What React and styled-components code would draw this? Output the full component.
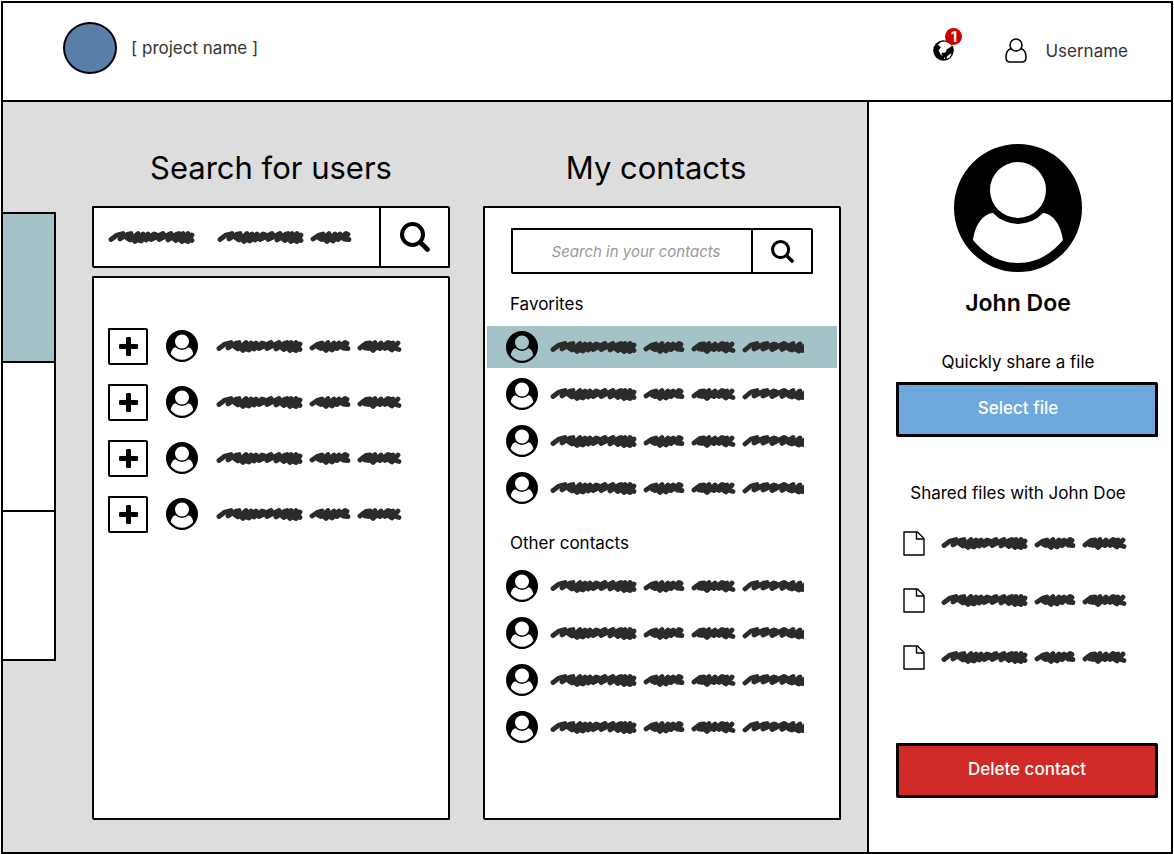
import React from "react";
import styled, { createGlobalStyle, css } from "styled-components";

const Global = createGlobalStyle`
  *, *::before, *::after { box-sizing: border-box; }
  body { margin: 0; background: #fff; }
  body, button, input { font-family: Inter, "Liberation Sans", sans-serif; color: #000; }
  h1, h2, h3, p, ul { margin: 0; padding: 0; font-weight: 400; }
  ul { list-style: none; }
  svg { display: block; flex: none; }
`;

const ink = "2px solid #000";

const sketchBox = css`
  border: ${ink};
  border-radius: 1px 2px 1px 2px;
  background: #fff;
`;

const Page = styled.div`
  min-height: calc(100vh - 1px);
  margin: 1px 1px 0;
  display: flex;
  flex-direction: column;
  border: ${ink};
`;

const Header = styled.header`
  display: flex;
  align-items: center;
  justify-content: space-between;
  height: 99px;
  padding: 0 43px 0 60px;
  border-bottom: ${ink};
`;

const Brand = styled.a`
  display: flex;
  align-items: center;
  gap: 14px;
  padding-bottom: 8px;
  font-size: 17px;
  line-height: 24px;
  color: #333;
  text-decoration: none;
`;

const Logo = styled.span`
  width: 54px;
  height: 52px;
  border: ${ink};
  border-radius: 50%;
  background: #5a7eaa;
`;

const Account = styled.div`
  display: flex;
  align-items: center;
  gap: 51px;
  padding-bottom: 2px;
`;

const PlainButton = styled.button`
  position: relative;
  display: flex;
  align-items: center;
  gap: 18px;
  padding: 0;
  border: 0;
  background: none;
  font-size: 17px;
  line-height: 24px;
  color: #333;
`;

const Badge = styled.span`
  position: absolute;
  top: -12px;
  left: 12px;
  width: 17px;
  height: 17px;
  border-radius: 50%;
  background: #c00;
  color: #fff;
  font-size: 15px;
  font-weight: 700;
  line-height: 17px;
  text-align: center;
`;

const Body = styled.div`
  flex: 1;
  display: flex;
`;

const Main = styled.main`
  flex: 1;
  display: flex;
  background: #ddd;
  padding: 0 26px 32px 0;
`;

const Tabs = styled.nav`
  width: 53px;
  margin: 110px 36px 0 0;
`;

const Tab = styled.button`
  display: block;
  width: 100%;
  height: 151px;
  margin-bottom: -2px;
  padding: 0;
  border: ${ink};
  border-left: 0;
  background: ${(p) => (p.$active ? "#a3c3c8" : "#fff")};
`;

const Columns = styled.div`
  flex: 1;
  display: flex;
  gap: 33px;
`;

const Column = styled.section`
  flex: 1;
  min-width: 0;
  display: flex;
  flex-direction: column;
  padding-top: 46px;
`;

const Title = styled.h1`
  padding-right: ${(p) => (p.$inset ? 12 : 0)}px;
  margin-bottom: 18px;
  font-size: 31px;
  line-height: 40px;
  text-align: center;
`;

const SearchForm = styled.form`
  ${sketchBox}
  position: relative;
  display: flex;
  height: ${(p) => (p.$large ? 62 : 46)}px;
  margin: ${(p) => (p.$large ? "0 0 8px" : "20px 26px 18px")};
`;

const SearchInput = styled.input`
  flex: 1;
  min-width: 0;
  padding: 0 0 0 8px;
  border: 0;
  background: none;
  outline: 0;
  font-size: 15px;
  text-align: center;
  &::placeholder {
    color: #999;
    font-style: italic;
    opacity: 1;
  }
`;

const Typed = styled.span`
  position: absolute;
  inset: 0 auto 0 14px;
  display: flex;
  align-items: center;
  gap: 22px;
  pointer-events: none;
`;

const SearchButton = styled.button`
  width: ${(p) => (p.$large ? 69 : 60)}px;
  display: flex;
  align-items: center;
  justify-content: center;
  padding: 0;
  border: 0;
  border-left: ${ink};
  background: #fff;
`;

const Panel = styled.div`
  ${sketchBox}
  flex: 1;
`;

const Results = styled.ul`
  display: grid;
  gap: 16px;
  padding: 48px 14px;
`;

const Result = styled.li`
  display: flex;
  align-items: center;
  height: 40px;
  gap: 18px;
`;

const AddButton = styled.button`
  ${sketchBox}
  width: 40px;
  height: 37px;
  display: grid;
  place-items: center;
  padding: 0;
`;

const GroupLabel = styled.h2`
  padding: 0 25px;
  margin-bottom: 10px;
  font-size: 17px;
  line-height: 24px;
`;

const ContactList = styled.ul`
  display: grid;
  gap: 5px;
  margin: 0 2px 22px;
`;

const Contact = styled.li`
  display: flex;
  align-items: center;
  gap: 12px;
  height: 42px;
  padding-left: 19px;
  background: ${(p) => (p.$active ? "#a3c3c8" : "transparent")};
`;

const Aside = styled.aside`
  width: 304px;
  display: flex;
  flex-direction: column;
  border-left: ${ink};
  padding: 42px 13px 54px 27px;
`;

const Centered = styled.div`
  display: flex;
  flex-direction: column;
  align-items: center;
  padding-right: 18px;
`;

const Name = styled.h2`
  margin: 16px 0 32px;
  font-size: 23px;
  font-weight: 600;
  line-height: 30px;
`;

const Caption = styled.h3`
  font-size: 17px;
  line-height: 24px;
  margin-bottom: 8px;
`;

const ActionButton = styled.button`
  border: 3px solid #000;
  border-radius: 1px 2px 1px 2px;
  height: 55px;
  padding: 0 ${(p) => (p.$inset ? 18 : 0)}px 4px 0;
  margin-top: ${(p) => (p.$last ? "auto" : 0)};
  margin-bottom: ${(p) => (p.$last ? 0 : 44)}px;
  background: ${(p) => (p.$danger ? "#cf2a27" : "#6fa8dc")};
  color: #fff;
  font-size: 17px;
  font-weight: 500;
`;

const Files = styled.ul`
  display: grid;
  gap: 33px;
  padding: 18px 0 24px 7px;
`;

const File = styled.li`
  display: flex;
  align-items: center;
  gap: 16px;
  height: 24px;
`;

const WORDS = {
  long: [
    87,
    "M3 9.500L9 5L15 3.500L12 9L20 4L23 3.500L19 8L22 10L30 3.500L24 9L27 11.500L35 4L30 10L33 11L40 4L36 8L38 10L46 4L48 4.500L43 9.500L55 3.500L56 5L51 9.500L63 3.500L64 5L60 10L69 4L71 3.500L66 9L68 10.500L75 3.500L71 9L74 11.500L80 3.500L76 10L80 11.500L84 5L81 9L84 10.500",
  ],
  mid: [
    42,
    "M3 9L9 5L13 4L9 8L12 9.500L19 3.500L14 9L17 11.500L25 4L20 9L23 11L30 4L25 8L28 9.500L36 3.500L38 4.500L34 9L39 9.500",
  ],
  wide: [
    45,
    "M3 9L9 4.500L13 4L8 9L11 9.500L18 3.500L13 9L16 11.500L24 4L20 8L23 9.500L31 3.500L33 4L28 9.500L36 4L32 9L35 11L41 4L37 9L42 10.500",
  ],
  cut: [
    62,
    "M3 10L9 5L15 3.500L12 9L22 4L25 3.500L21 9L32 4L34 4.500L30 9.500L42 3.500L44 4.500L40 9.500L51 3.500L47 9L50 10L58 4L53 9L57 11L65 4L58 10L65 11",
  ],
};

const WordRow = styled.span`
  display: flex;
  gap: 6px;
`;

function Scribble({ words }) {
  return (
    <WordRow>
      {words.map((word, i) => (
        <svg key={i} width={WORDS[word][0]} height="14" viewBox={`0 0 ${WORDS[word][0]} 14`} aria-hidden="true">
          <path
            d={WORDS[word][1]}
            fill="none"
            stroke="#2b2b2b"
            strokeWidth="4.800"
            strokeLinecap="round"
            strokeLinejoin="round"
          />
        </svg>
      ))}
    </WordRow>
  );
}

function Avatar({ size }) {
  return (
    <svg width={size} height={size} viewBox="0 0 128 128" aria-hidden="true">
      <path
        fillRule="evenodd"
        d="M64 0A64 64 0 1 1 64 128A64 64 0 1 1 64 0ZM64 18A28 28 0 1 0 64 74A28 28 0 1 0 64 18ZM39 69C28 70 21 82 19 96C31 111 47 119 64 119S97 111 109 96C107 82 100 70 89 69A34 34 0 0 1 39 69Z"
      />
    </svg>
  );
}

function SearchIcon({ size }) {
  return (
    <svg width={size} height={size} viewBox="0 0 30 30" fill="none" stroke="#000" aria-hidden="true">
      <circle cx="12.500" cy="12.500" r="10.500" strokeWidth="4" />
      <path d="M20.500 20.500L27.500 27.500" strokeWidth="4.600" strokeLinecap="round" />
    </svg>
  );
}

function PlusIcon() {
  return (
    <svg width="19" height="19" viewBox="0 0 19 19" aria-hidden="true">
      <rect x="0" y="7" width="19" height="5" rx="1.300" />
      <rect x="7" y="0" width="5" height="19" rx="1.300" />
    </svg>
  );
}

function FileIcon() {
  return (
    <svg width="22" height="25" viewBox="0 0 22 25" fill="none" stroke="#000" strokeWidth="1.400" strokeLinejoin="round" aria-hidden="true">
      <path d="M1 1H14.500L21 7.500V24H1ZM13.500 1V8H21" />
    </svg>
  );
}

function UserIcon() {
  return (
    <svg width="22" height="25" viewBox="0 0 22 25" fill="none" stroke="#000" strokeWidth="1.500" aria-hidden="true">
      <circle cx="11" cy="7" r="6" />
      <path d="M6 10.500C2.500 11.500 1 15 1 19.500C1 22.500 2.500 24 5 24H17C19.500 24 21 22.500 21 19.500C21 15 19.500 11.500 16 10.500" />
    </svg>
  );
}

function GlobeIcon() {
  return (
    <svg width="21" height="21" viewBox="0 0 21 21" aria-hidden="true">
      <circle cx="10.500" cy="10.500" r="10.300" />
      <path
        fill="#fff"
        d="M5 4.500L8 2L12 1.500L17 3.500L19 6L16 8L13.500 9.500L13 12L11 13L9 12.500L8.500 14L10 16L7.500 14.500L6.500 12L5.500 10.500L7 8.500L8 7L6 6ZM15 15.500L17.500 13.500L18.500 14L16.500 17.500L14 18.800L13.500 17ZM11 17L12.500 18.500L11 19Z"
      />
    </svg>
  );
}

const FAVORITES = ["f1", "f2", "f3", "f4"];
const OTHERS = ["o1", "o2", "o3", "o4"];
const RESULTS = ["r1", "r2", "r3", "r4"];
const SHARED = ["s1", "s2", "s3"];

function Contacts({ items, active }) {
  return (
    <ContactList>
      {items.map((id) => (
        <Contact key={id} $active={id === active}>
          <Avatar size={32} />
          <Scribble words={["long", "mid", "wide", "cut"]} />
        </Contact>
      ))}
    </ContactList>
  );
}

export default function App() {
  return (
    <>
      <Global />
      <Page>
        <Header>
          <Brand href="#">
            <Logo />
            [ project name ]
          </Brand>
          <Account>
            <PlainButton type="button" aria-label="Notifications">
              <GlobeIcon />
              <Badge>1</Badge>
            </PlainButton>
            <PlainButton type="button">
              <UserIcon />
              Username
            </PlainButton>
          </Account>
        </Header>
        <Body>
          <Main>
            <Tabs aria-label="Sections">
              <Tab type="button" aria-label="Contacts" $active />
              <Tab type="button" aria-label="Files" />
              <Tab type="button" aria-label="Settings" />
            </Tabs>
            <Columns>
              <Column>
                <Title>Search for users</Title>
                <SearchForm $large>
                  <SearchInput aria-label="Search for users" />
                  <Typed>
                    <Scribble words={["long"]} />
                    <Scribble words={["long", "mid"]} />
                  </Typed>
                  <SearchButton type="button" aria-label="Search users" $large>
                    <SearchIcon size={30} />
                  </SearchButton>
                </SearchForm>
                <Panel>
                  <Results>
                    {RESULTS.map((id) => (
                      <Result key={id}>
                        <AddButton type="button" aria-label="Add contact">
                          <PlusIcon />
                        </AddButton>
                        <Avatar size={32} />
                        <Scribble words={["long", "mid", "wide"]} />
                      </Result>
                    ))}
                  </Results>
                </Panel>
              </Column>
              <Column>
                <Title $inset>My contacts</Title>
                <Panel>
                  <SearchForm>
                    <SearchInput aria-label="Search in your contacts" placeholder="Search in your contacts" />
                    <SearchButton type="button" aria-label="Search contacts">
                      <SearchIcon size={23} />
                    </SearchButton>
                  </SearchForm>
                  <GroupLabel>Favorites</GroupLabel>
                  <Contacts items={FAVORITES} active="f1" />
                  <GroupLabel>Other contacts</GroupLabel>
                  <Contacts items={OTHERS} />
                </Panel>
              </Column>
            </Columns>
          </Main>
          <Aside>
            <Centered>
              <Avatar size={128} />
              <Name>John Doe</Name>
              <Caption>Quickly share a file</Caption>
            </Centered>
            <ActionButton type="button" $inset>
              Select file
            </ActionButton>
            <Centered>
              <Caption>Shared files with John Doe</Caption>
            </Centered>
            <Files>
              {SHARED.map((id) => (
                <File key={id}>
                  <FileIcon />
                  <Scribble words={["long", "mid", "wide"]} />
                </File>
              ))}
            </Files>
            <ActionButton type="button" $danger $last>
              Delete contact
            </ActionButton>
          </Aside>
        </Body>
      </Page>
    </>
  );
}
